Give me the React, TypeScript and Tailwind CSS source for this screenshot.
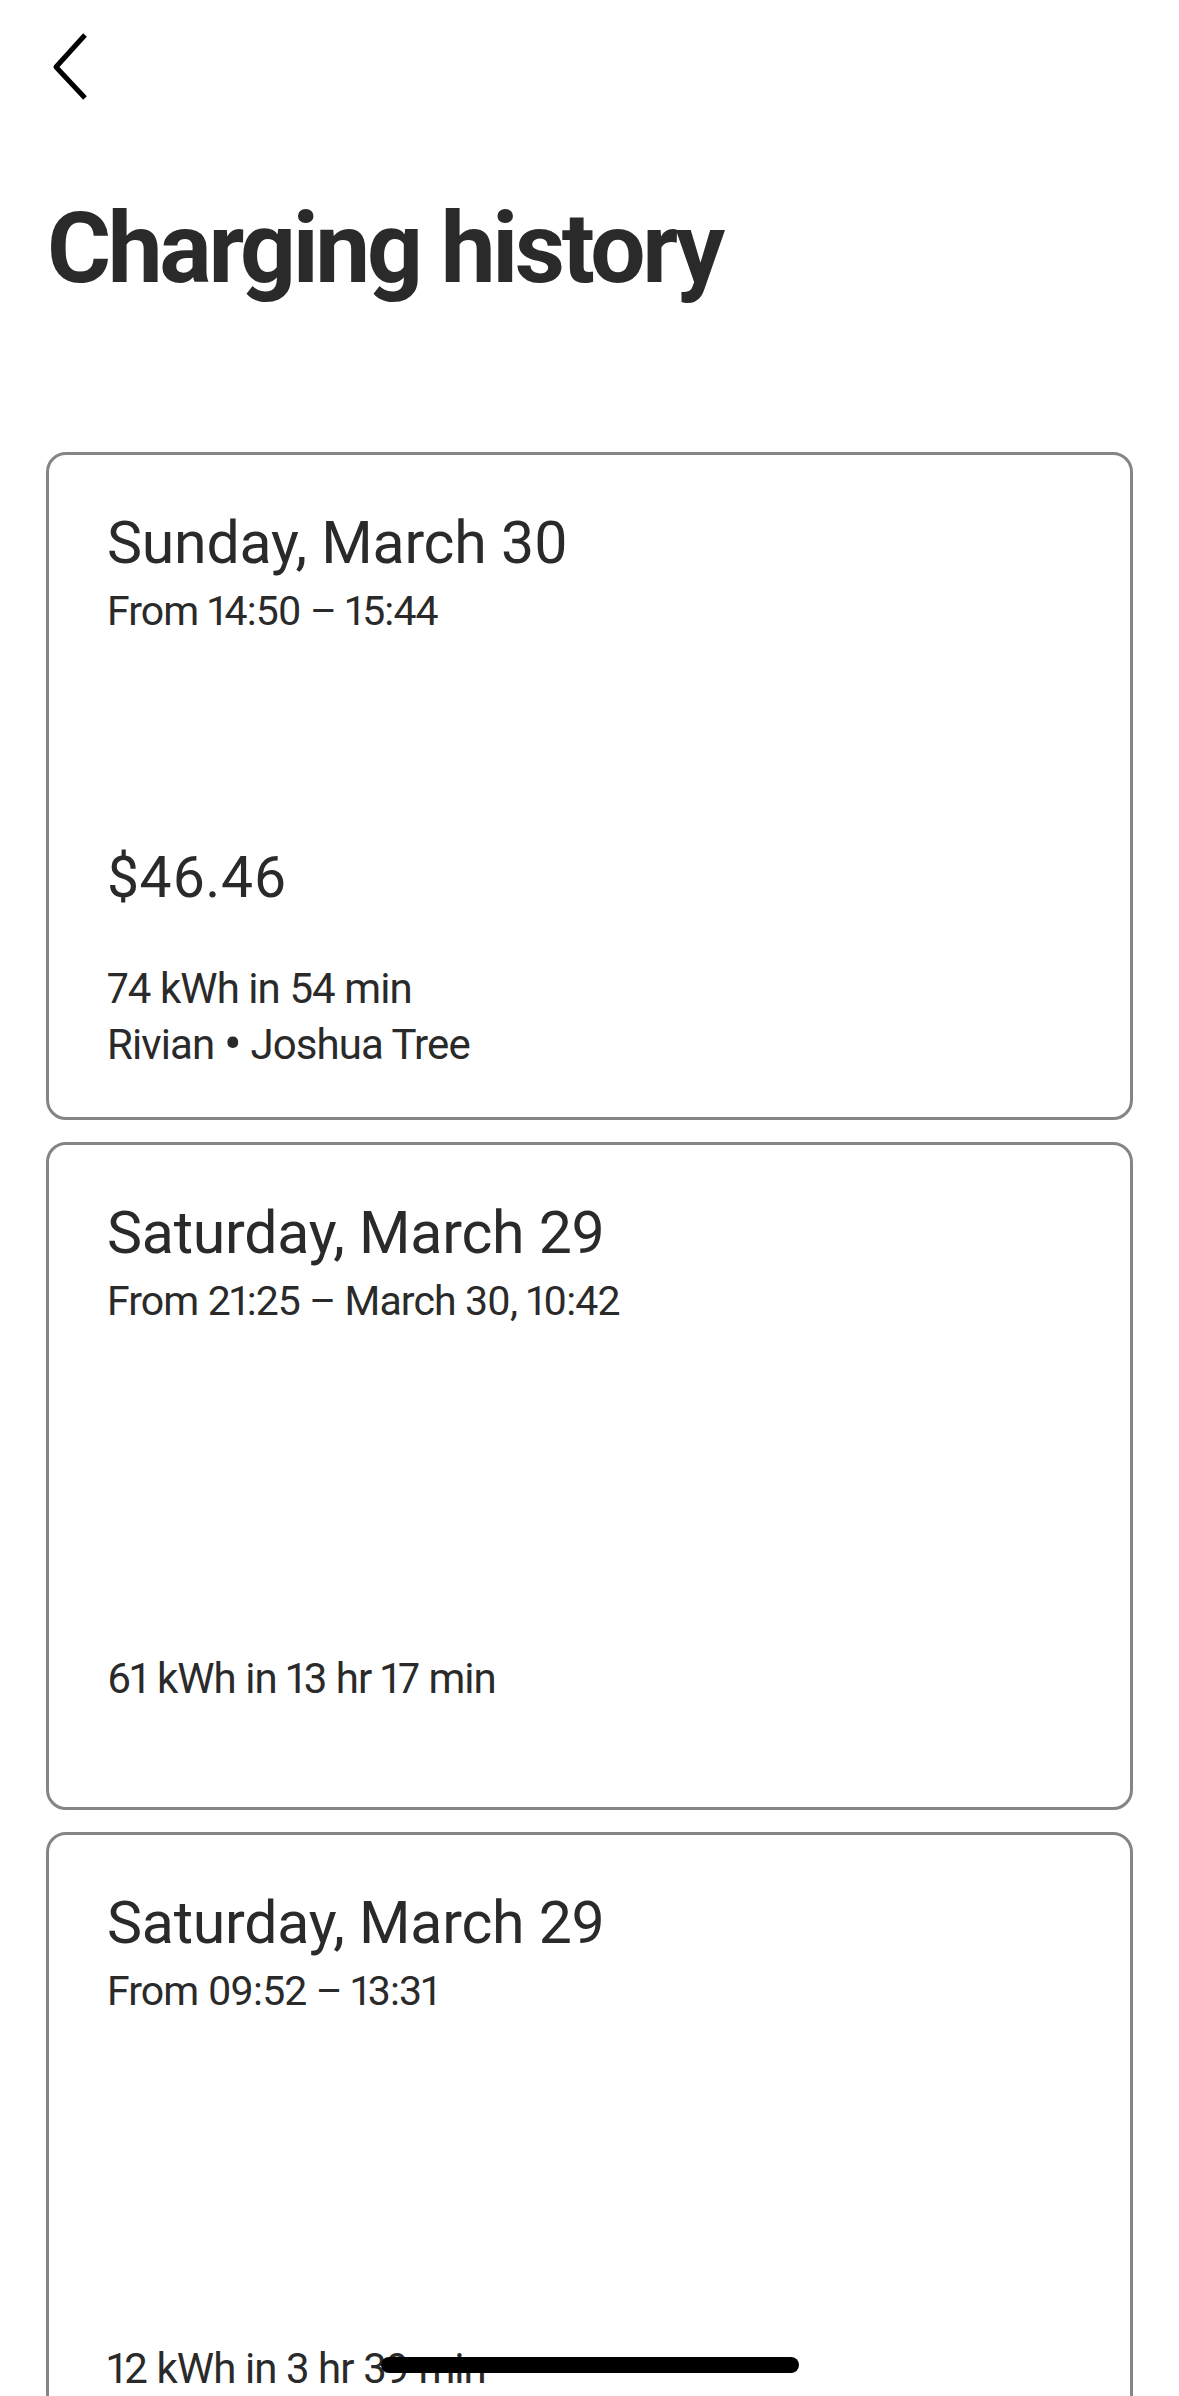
type Session = {
  day: string;
  range: string;
  price?: string;
  energy: string;
  place?: [string, string];
};

const sessions: Session[] = [
  {
    day: 'Sunday, March 30',
    range: 'From 14:50 – 15:44',
    price: '$46.46',
    energy: '74 kWh in 54 min',
    place: ['Rivian', 'Joshua Tree'],
  },
  {
    day: 'Saturday, March 29',
    range: 'From 21:25 – March 30, 10:42',
    energy: '61 kWh in 13 hr 17 min',
  },
  {
    day: 'Saturday, March 29',
    range: 'From 09:52 – 13:31',
    energy: '12 kWh in 3 hr 39 min',
  },
];

function BackButton() {
  return (
    <button className="block pt-[28px] pl-[48px]" aria-label="Back">
      <svg width="44" height="76" viewBox="0 0 44 76" fill="none">
        <path
          d="M37 7 L8 39 L37 70"
          stroke="#000"
          strokeWidth="5"
          strokeLinejoin="round"
        />
      </svg>
    </button>
  );
}

function SessionCard({ s }: { s: Session }) {
  return (
    <div className="h-[668px] shrink-0 rounded-[20px] border-[3px] border-[#858585] bg-white pt-[54px] pl-[58px] pr-[40px] proportional-nums">
      <div className="text-[59px] leading-[68px] tracking-[-0.004em] text-[#2a2a2a]">{s.day}</div>
      <div className="mt-[9px] text-[41px] leading-[50px] tracking-[-0.022em] text-[#2a2a2a]">{s.range}</div>
      <div className="mt-[209px] h-[66px] text-[57px] leading-[66px] tracking-[0.01em] text-[#2a2a2a]">
        {s.price}
      </div>
      <div className="mt-[50px] text-[42px] leading-[56px] tracking-[-0.022em] text-[#2a2a2a]">
        <div>{s.energy}</div>
        {s.place && (
          <div>
            {s.place[0]} <span className="text-[54px] leading-[0] align-[-3px]">•</span> {s.place[1]}
          </div>
        )}
      </div>
    </div>
  );
}

export default function App() {
  return (
    <div className="relative h-[2396px] overflow-hidden bg-white font-['Roboto','Liberation_Sans',sans-serif]">
      <BackButton />
      <h1 className="mt-[86px] pl-[47px] text-[98px] font-bold leading-[118px] tracking-[-0.034em] text-[#2a2a2a]">
        Charging history
      </h1>
      <div className="mt-[144px] flex flex-col gap-[22px] px-[46px]">
        {sessions.map((s, i) => (
          <SessionCard key={i} s={s} />
        ))}
      </div>
      <div className="absolute bottom-[23px] left-1/2 h-[16px] w-[418px] -translate-x-1/2 rounded-full bg-black" />
    </div>
  );
}
